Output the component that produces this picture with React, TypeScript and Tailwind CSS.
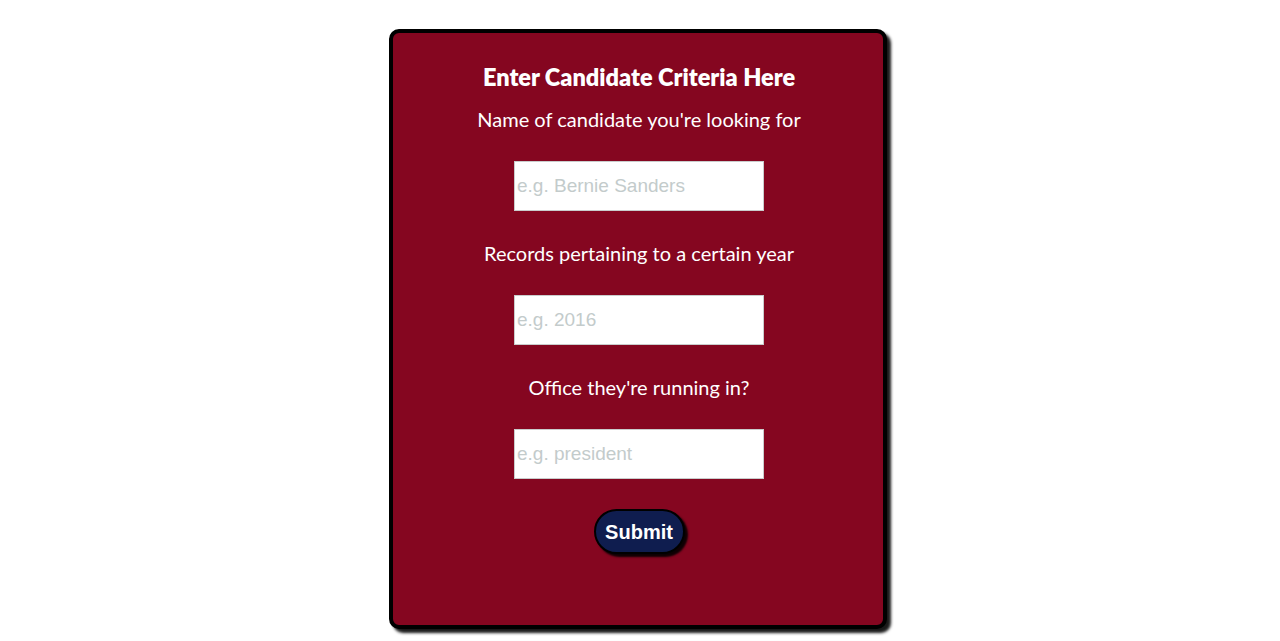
function Field({ label, placeholder }: { label: string; placeholder: string }) {
  return (
    <>
      <p className="text-[20px] leading-[24px] text-white mt-[16px]">{label}</p>
      <input
        type="text"
        placeholder={placeholder}
        className="mt-[30px] mb-[14px] w-[250px] h-[50px] bg-white border border-[#c9cccc] px-[2px] text-[19px] text-black placeholder:text-[#c3cbcb] outline-none"
        style={{ fontFamily: '"Liberation Sans", Arial, sans-serif' }}
      />
    </>
  )
}

function App(): JSX.Element {
  return (
    <div className="w-full min-h-screen bg-white flex justify-center" style={{ fontFamily: 'Lato, "Open Sans", sans-serif' }}>
      <div className="mt-[29px] ml-[-4px] w-[498px] h-[600px] bg-[#850620] border-4 border-black rounded-[10px] shadow-[4px_4px_3px_rgba(0,0,0,0.9)] flex flex-col items-center pt-[30px] pl-[2px]">
        <h2 className="text-[23.5px] leading-[28px] font-extrabold text-white">Enter Candidate Criteria Here</h2>
        <Field label="Name of candidate you're looking for" placeholder="e.g. Bernie Sanders" />
        <Field label="Records pertaining to a certain year" placeholder="e.g. 2016" />
        <Field label="Office they're running in?" placeholder="e.g. president" />
        <button
          className="mt-[16px] w-[91px] h-[45px] rounded-full bg-[#0f1d4f] border-2 border-black text-white text-[20px] font-bold shadow-[3px_3px_2px_rgba(0,0,0,0.9)]"
          style={{ fontFamily: '"Liberation Sans", Arial, sans-serif' }}
        >
          Submit
        </button>
      </div>
    </div>
  )
}

export default App
